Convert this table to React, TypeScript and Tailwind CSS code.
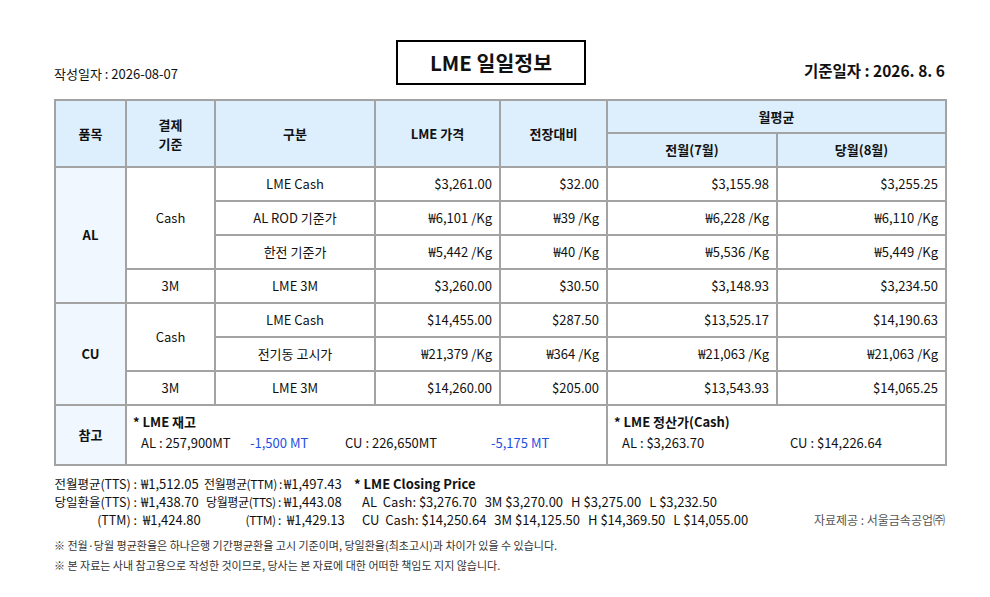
import React from "react";

const font = { fontFamily: '"Noto Sans CJK KR", "Noto Sans", sans-serif' };

type Row = {
  item?: { label: string; span: number };
  basis?: { label: string; span: number };
  name: string;
  price: string;
  diff: string;
  prev: string;
  cur: string;
};

const rows: Row[] = [
  { item: { label: "AL", span: 4 }, basis: { label: "Cash", span: 3 }, name: "LME Cash", price: "$3,261.00", diff: "$32.00", prev: "$3,155.98", cur: "$3,255.25" },
  { name: "AL ROD 기준가", price: "₩6,101 /Kg", diff: "₩39 /Kg", prev: "₩6,228 /Kg", cur: "₩6,110 /Kg" },
  { name: "한전 기준가", price: "₩5,442 /Kg", diff: "₩40 /Kg", prev: "₩5,536 /Kg", cur: "₩5,449 /Kg" },
  { basis: { label: "3M", span: 1 }, name: "LME 3M", price: "$3,260.00", diff: "$30.50", prev: "$3,148.93", cur: "$3,234.50" },
  { item: { label: "CU", span: 3 }, basis: { label: "Cash", span: 2 }, name: "LME Cash", price: "$14,455.00", diff: "$287.50", prev: "$13,525.17", cur: "$14,190.63" },
  { name: "전기동 고시가", price: "₩21,379 /Kg", diff: "₩364 /Kg", prev: "₩21,063 /Kg", cur: "₩21,063 /Kg" },
  { basis: { label: "3M", span: 1 }, name: "LME 3M", price: "$14,260.00", diff: "$205.00", prev: "$13,543.93", cur: "$14,065.25" },
];

const cell = "border-2 border-[#a3a3a3]";
const head = `${cell} bg-[#ddeefc] font-bold text-center`;
const num = `${cell} text-right pr-[7px]`;

const closing = [
  ["AL  Cash: $3,276.70", "3M $3,270.00", "H $3,275.00", "L $3,232.50"],
  ["CU  Cash: $14,250.64", "3M $14,125.50", "H $14,369.50", "L $14,055.00"],
];

// 환율 표: [라벨, 값, 라벨, 값]
const rates = [
  ["전월평균(TTS) :", "₩1,512.05", "전월평균(TTM) :", "₩1,497.43"],
  ["당일환율(TTS) :", "₩1,438.70", "당월평균(TTS) :", "₩1,443.08"],
  ["(TTM) :", "₩1,424.80", "(TTM) :", "₩1,429.13"],
];

export default function App() {
  return (
    <div className="w-[990px] h-[597px] bg-white text-[#111] overflow-hidden" style={font}>
      <div className="ml-[54px] w-[891px] pt-[40px]">
        {/* top line */}
        <div className="flex items-end justify-between">
          <div className="text-[13px] pb-[2px] w-[160px] whitespace-nowrap">작성일자 : 2026-08-07</div>
          <div className="border-2 border-black w-[190px] h-[45px] flex items-center justify-center text-[20.5px] font-bold ml-[9px]">
            LME 일일정보
          </div>
          <div className="text-[15.5px] font-bold pb-[3px] w-[186px] text-right whitespace-nowrap">기준일자 : 2026. 8. 6</div>
        </div>

        {/* table */}
        <table className="mt-[14px] w-[891px] table-fixed border-collapse text-[13px]">
          <colgroup>
            <col className="w-[71px]" />
            <col className="w-[89px]" />
            <col className="w-[160px]" />
            <col className="w-[125px]" />
            <col className="w-[107px]" />
            <col className="w-[170px]" />
            <col className="w-[169px]" />
          </colgroup>
          <thead>
            <tr className="h-[33px]">
              <th rowSpan={2} className={head}>품목</th>
              <th rowSpan={2} className={`${head} leading-[19px]`}>
                결제
                <br />
                기준
              </th>
              <th rowSpan={2} className={head}>구분</th>
              <th rowSpan={2} className={head}>LME 가격</th>
              <th rowSpan={2} className={head}>전장대비</th>
              <th colSpan={2} className={head}>월평균</th>
            </tr>
            <tr className="h-[34px]">
              <th className={head}>전월(7월)</th>
              <th className={head}>당월(8월)</th>
            </tr>
          </thead>
          <tbody>
            {rows.map((r, i) => (
              <tr key={i} className="h-[34px]">
                {r.item && (
                  <td rowSpan={r.item.span} className={`${cell} bg-[#f0f7fe] text-center font-bold`}>
                    {r.item.label}
                  </td>
                )}
                {r.basis && (
                  <td rowSpan={r.basis.span} className={`${cell} text-center`}>
                    {r.basis.label}
                  </td>
                )}
                <td className={`${cell} text-center`}>{r.name}</td>
                <td className={num}>{r.price}</td>
                <td className={num}>{r.diff}</td>
                <td className={num}>{r.prev}</td>
                <td className={num}>{r.cur}</td>
              </tr>
            ))}
            <tr className="h-[60px]">
              <td className={`${cell} bg-[#f0f7fe] text-center font-bold`}>참고</td>
              <td colSpan={4} className={`${cell} align-top pl-[6px] pt-[6px]`}>
                <div className="font-bold leading-[20px]">* LME 재고</div>
                <div className="flex leading-[22px] pl-[8px] whitespace-pre">
                  <span className="w-[109px]">AL : 257,900MT</span>
                  <span className="w-[95px] text-[#1f4fe0]">-1,500 MT</span>
                  <span className="w-[146px]">CU : 226,650MT</span>
                  <span className="text-[#1f4fe0]">-5,175 MT</span>
                </div>
              </td>
              <td colSpan={2} className={`${cell} align-top pl-[6px] pt-[6px]`}>
                <div className="font-bold leading-[20px]">* LME 정산가(Cash)</div>
                <div className="flex leading-[22px] pl-[8px] whitespace-pre">
                  <span className="w-[168px]">AL : $3,263.70</span>
                  <span>CU : $14,226.64</span>
                </div>
              </td>
            </tr>
          </tbody>
        </table>

        {/* exchange rates and closing price */}
        <div className="mt-[9px] flex text-[13px] leading-[18px] whitespace-nowrap">
          <div className="grid grid-cols-[83px_67px_77px_73px] w-[300px] shrink-0">
            {rates.map((r, i) => (
              <React.Fragment key={i}>
                <span className="text-right text-[12.5px]">{r[0]}</span>
                <span className={i === 2 ? "pl-[6px]" : "pl-[4px]"}>{r[1]}</span>
                <span className="text-right text-[12px] tracking-[-0.4px]">{r[2]}</span>
                <span className={i === 2 ? "pl-[6px]" : "pl-[3px]"}>{r[3]}</span>
              </React.Fragment>
            ))}
          </div>
          <div>
            <div className="font-bold">* LME Closing Price</div>
            {closing.map((line, i) => (
              <div key={i} className="flex pl-[8px] whitespace-pre gap-[8px]">
                {line.map((s) => (
                  <span key={s}>{s}</span>
                ))}
              </div>
            ))}
          </div>
          <div className="flex-1 flex items-end justify-end text-[12px] text-[#555]">자료제공 : 서울금속공업㈜</div>
        </div>

        <div className="mt-[6px] text-[11px] text-[#333] leading-[20px]">
          <div>※ 전월·당월 평균환율은 하나은행 기간평균환율 고시 기준이며, 당일환율(최초고시)과 차이가 있을 수 있습니다.</div>
          <div>※ 본 자료는 사내 참고용으로 작성한 것이므로, 당사는 본 자료에 대한 어떠한 책임도 지지 않습니다.</div>
        </div>
      </div>
    </div>
  );
}
